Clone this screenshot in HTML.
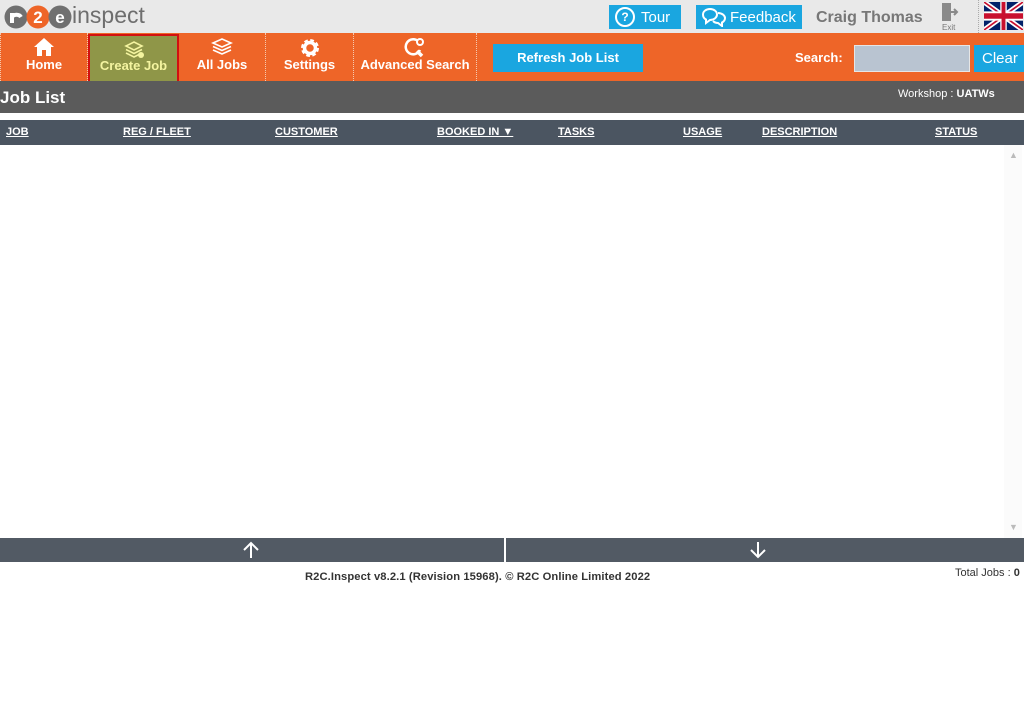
<!DOCTYPE html>
<html><head><style>
*{margin:0;padding:0;box-sizing:border-box}
body{width:1024px;height:709px;background:#fff;font-family:"Liberation Sans",sans-serif;position:relative;overflow:hidden}
.a{position:absolute}
.top{left:0;top:0;width:1024px;height:33px;background:#e9e9e9}
.nav{left:0;top:33px;width:1024px;height:48px;background:#ee6528}
.ni{top:0;height:48px;color:#fff;font-weight:bold;font-size:13px;text-align:center;border-right:1px dotted #f5c9b0}
.ni span{position:absolute;bottom:9px;left:0;right:0}
.ni svg{position:absolute;top:4px;left:50%;margin-left:-11px}
.th{top:120px;left:0;width:1024px;height:25px;background:#4b5561;color:#fff;font-size:11px;font-weight:bold}
.th div{position:absolute;top:6px;text-decoration:underline}
.btn{background:#1aa6e0;color:#fff;font-size:15px;height:24px;display:flex;align-items:center}
</style></head><body>
<div class="a top"></div>
<div class="a" style="left:4px;top:5px;">
<svg width="68" height="24"><circle cx="12" cy="12" r="11.5" fill="#707070"/><circle cx="34" cy="12" r="11.5" fill="#ee6528"/><circle cx="56" cy="12" r="11.5" fill="#707070"/><rect x="6" y="8" width="4" height="10" fill="#fff"/><path d="M8 12a5 4 0 0 1 9 0" stroke="#fff" stroke-width="4" fill="none"/><text x="34" y="18" fill="#fff" font-size="17" font-weight="bold" text-anchor="middle" font-family="Liberation Sans">2</text><text x="56" y="18" fill="#fff" font-size="17" font-weight="bold" text-anchor="middle" font-family="Liberation Sans">e</text></svg></div>
<div class="a" style="left:72px;top:2px;font-size:23px;color:#6e6e6e">inspect</div>
<div class="a btn" style="left:609px;top:5px;width:72px;padding-left:6px"><span style="display:inline-block;width:20px;height:20px;border:2px solid #fff;border-radius:50%;font-size:12px;line-height:16px;text-align:center;font-weight:bold;margin-right:6px">?</span>Tour</div>
<div class="a btn" style="left:696px;top:5px;width:106px;padding-left:5px"><svg width="26" height="20" style="margin-right:3px"><path d="M9 2c4 0 7 2.5 7 5.5S13 13 9 13l-4 3v-3.5C3 11.5 2 9.5 2 7.5 2 4.5 5 2 9 2z" stroke="#fff" stroke-width="2" fill="none"/><path d="M17 6c4 0 7 2.5 7 5s-1 3.5-3 4.5V19l-4-3c-2 0-4-1-5-2" stroke="#fff" stroke-width="2" fill="none"/></svg>Feedback</div>
<div class="a" style="left:816px;top:9px;font-size:16px;font-weight:bold;color:#777">Craig Thomas</div>
<div class="a" style="left:940px;top:3px;width:20px;height:18px"><svg width="20" height="18"><rect x="2" y="0" width="9" height="18" fill="#8a8a8a"/><path d="M11 9h6M14 6l3 3-3 3" stroke="#8a8a8a" stroke-width="2" fill="none"/></svg></div>
<div class="a" style="left:942px;top:23px;font-size:8px;color:#777">Exit</div>
<div class="a" style="left:978px;top:0;width:1px;height:33px;border-left:1px dotted #aaa"></div>
<div class="a" style="left:984px;top:2px;width:39px;height:28px"><svg width="39" height="28" viewBox="0 0 60 30" preserveAspectRatio="none"><rect width="60" height="30" fill="#012169"/><path d="M0 0L60 30M60 0L0 30" stroke="#fff" stroke-width="6"/><path d="M0 0L60 30M60 0L0 30" stroke="#C8102E" stroke-width="2"/><path d="M30 0v30M0 15h60" stroke="#fff" stroke-width="10"/><path d="M30 0v30M0 15h60" stroke="#C8102E" stroke-width="6"/></svg></div>
<div class="a nav"></div>
<div class="a ni" style="left:0;top:33px;width:88px;border-left:1px dotted #f5c9b0"><svg width="22" height="20"><path d="M11 1L1 10h3v9h5v-6h4v6h5v-9h3z" fill="#fff"/></svg><span>Home</span></div>
<div class="a ni" style="left:88px;top:34px;width:91px;height:50px;background:#8f9648;border:2px solid #d21010;color:#f4f4a0"><svg width="22" height="20"><path d="M3 6l8-4 8 4-8 4z M3 9.5l8 4 8-4 M3 13l8 4 5-2.5" stroke="#f4f4a0" stroke-width="1.6" fill="none"/><circle cx="18" cy="15" r="3" fill="#f4f4a0"/></svg><span>Create Job</span></div>
<div class="a ni" style="left:179px;top:33px;width:87px"><svg width="22" height="20"><path d="M2 6l9-4 9 4-9 4z M2 9.5l9 4 9-4 M2 13l9 4 9-4" stroke="#fff" stroke-width="1.6" fill="none"/></svg><span>All Jobs</span></div>
<div class="a ni" style="left:266px;top:33px;width:88px"><svg width="22" height="22"><circle cx="11" cy="11" r="7" fill="none" stroke="#fff" stroke-width="4" stroke-dasharray="3.3 2.2"/><circle cx="11" cy="11" r="5.5" fill="none" stroke="#fff" stroke-width="3.5"/></svg><span>Settings</span></div>
<div class="a ni" style="left:354px;top:33px;width:123px"><svg width="22" height="22"><path d="M14 4a7.5 7.5 0 1 0 2 9" stroke="#fff" stroke-width="2.5" fill="none"/><circle cx="16" cy="5" r="3" fill="none" stroke="#fff" stroke-width="2"/><path d="M13 14l5 5" stroke="#fff" stroke-width="3.5"/></svg><span>Advanced Search</span></div>
<div class="a" style="left:493px;top:44px;width:150px;height:28px;background:#1aa6e0;color:#fff;font-weight:bold;font-size:13px;line-height:28px;text-align:center">Refresh Job List</div>
<div class="a" style="left:795px;top:50px;color:#fff;font-weight:bold;font-size:13px">Search:</div>
<div class="a" style="left:854px;top:45px;width:116px;height:27px;background:#b9c4d1;border:1px solid #e6e6e6"></div>
<div class="a" style="left:974px;top:45px;width:50px;height:27px;background:#1aa6e0;color:#fff;font-size:15px;line-height:27px;padding-left:8px">Clear</div>
<div class="a" style="left:0;top:81px;width:1024px;height:32px;background:#5b5b5b"></div>
<div class="a" style="left:0;top:88px;color:#fff;font-size:17px;font-weight:bold">Job List</div>
<div class="a" style="left:898px;top:88px;color:#fff;font-size:11px">Workshop : <b>UATWs</b></div>
<div class="a th"><div style="left:6px">JOB</div><div style="left:123px">REG / FLEET</div><div style="left:275px">CUSTOMER</div><div style="left:437px">BOOKED IN ▼</div><div style="left:558px">TASKS</div><div style="left:683px">USAGE</div><div style="left:762px">DESCRIPTION</div><div style="left:935px">STATUS</div></div>
<div class="a" style="left:1004px;top:145px;width:18px;height:393px;background:#fbfbfb"></div>
<div class="a" style="left:1009px;top:150px;font-size:9px;color:#bbb">▲</div>
<div class="a" style="left:1009px;top:522px;font-size:9px;color:#bbb">▼</div>
<div class="a" style="left:0;top:538px;width:1024px;height:24px;background:#525a64"></div>
<div class="a" style="left:504px;top:538px;width:2px;height:24px;background:#fff"></div>
<div class="a" style="left:241px;top:540px"><svg width="20" height="20"><path d="M10 18V3M3 10l7-7 7 7" stroke="#fff" stroke-width="2" fill="none"/></svg></div>
<div class="a" style="left:748px;top:540px"><svg width="20" height="20"><path d="M10 2v15M3 10l7 7 7-7" stroke="#fff" stroke-width="2" fill="none"/></svg></div>
<div class="a" style="left:305px;top:571px;font-size:11.2px;font-weight:bold;color:#333;letter-spacing:0.1px">R2C.Inspect v8.2.1 (Revision 15968). © R2C Online Limited 2022</div>
<div class="a" style="left:955px;top:567px;font-size:11px;color:#333">Total Jobs : <b>0</b></div>
</body></html>
